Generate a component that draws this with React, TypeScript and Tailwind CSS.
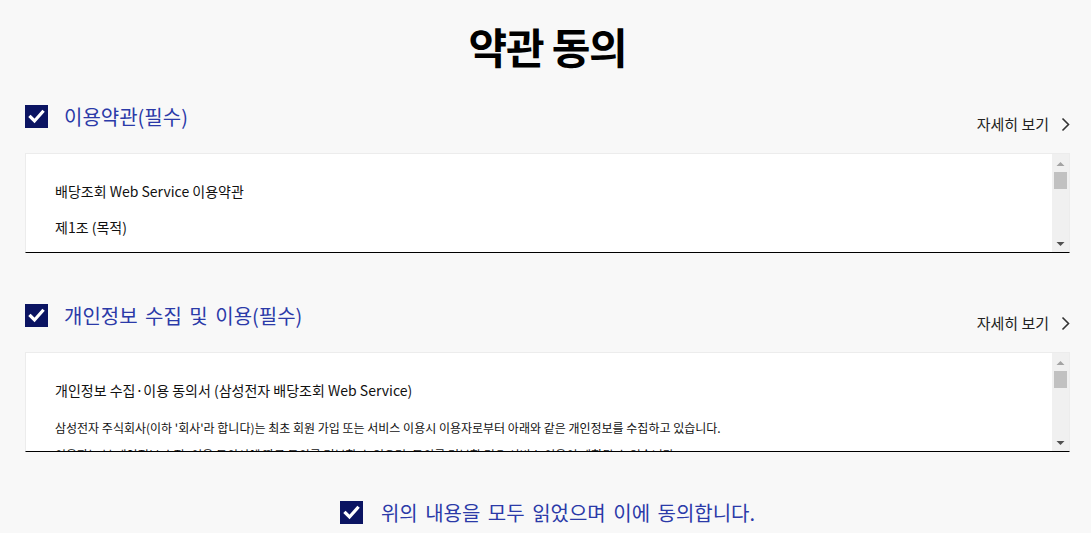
import React from "react";

const FONT = { fontFamily: '"Noto Sans CJK KR", "Noto Sans", sans-serif' };

const CheckBox = () => (
  <span className="flex items-center justify-center w-[23px] h-[23px] bg-[#0b1462] shrink-0">
    <svg width="17" height="17" viewBox="0 0 17 17" fill="none">
      <path d="M2.5 9 L6.5 13 L14.5 4" stroke="#fff" strokeWidth="3.2" strokeLinecap="square" />
    </svg>
  </span>
);

const MoreLink = () => (
  <a className="flex items-center gap-[12px] mt-[8px] text-[15px] text-[#222] cursor-pointer">
    <span>자세히 보기</span>
    <svg width="9" height="15" viewBox="0 0 9 15" fill="none">
      <path d="M1.5 1.5 L7.5 7.5 L1.5 13.5" stroke="#333" strokeWidth="1.6" />
    </svg>
  </a>
);

// classic scrollbar look, drawn beside the scrolling text
const ScrollRail = () => (
  <div className="flex flex-col items-center w-[17px] shrink-0 bg-[#f0f0f0] pt-[7px] pb-[5px]">
    <svg width="9" height="6" viewBox="0 0 9 6">
      <path d="M0.5 5 L4.5 1 L8.5 5 Z" fill="#a3a3a3" />
    </svg>
    <div className="mt-[5px] w-[13px] h-[17px] bg-[#c1c1c1]" />
    <div className="flex-1" />
    <svg width="9" height="6" viewBox="0 0 9 6">
      <path d="M0.5 1 L4.5 5 L8.5 1 Z" fill="#505050" />
    </svg>
  </div>
);

interface SectionProps {
  label: string;
  children: React.ReactNode;
}

const TermsSection: React.FC<SectionProps> = ({ label, children }) => (
  <section>
    <div className="flex items-start justify-between h-[48px]">
      <div className="flex items-center gap-[16px]">
        <CheckBox />
        <span className="text-[20px] leading-[23px] text-[#2b3aa8] [word-spacing:3px]">{label}</span>
      </div>
      <MoreLink />
    </div>
    <div className="flex h-[100px] bg-white border border-[#ececec] border-b-black">
      <div className="flex-1 overflow-y-scroll [scrollbar-width:none]">
        <div className="px-[29px] pt-[27px] text-[#111]">{children}</div>
      </div>
      <ScrollRail />
    </div>
  </section>
);

export default function App() {
  return (
    <div className="min-h-screen bg-[#f8f8f8] pl-[25px] pr-[21px]" style={FONT}>
      <h1 className="pt-[18px] text-center text-[42px] leading-[56px] font-bold text-black tracking-[-0.03em]">
        약관 동의
      </h1>
      <div className="mt-[31px] flex flex-col gap-[51px]">
        <TermsSection label="이용약관(필수)">
          <p className="text-[14px] leading-[20px]">배당조회 Web Service 이용약관</p>
          <p className="mt-[16px] text-[14px] leading-[20px]">제1조 (목적)</p>
          <p className="mt-[16px] text-[13px] leading-[20px]">
            이 약관은 삼성전자 주식회사(이하 '회사'라 합니다)가 제공하는 배당조회 Web Service의 이용조건 및 절차에 관한 사항을 규정함을 목적으로 합니다.
          </p>
        </TermsSection>
        <TermsSection label="개인정보 수집 및 이용(필수)">
          <p className="text-[14px] leading-[20px]">개인정보 수집·이용 동의서 (삼성전자 배당조회 Web Service)</p>
          <p className="mt-[19px] text-[12px] leading-[18px]">
            삼성전자 주식회사(이하 '회사'라 합니다)는 최초 회원 가입 또는 서비스 이용시 이용자로부터 아래와 같은 개인정보를 수집하고 있습니다.
          </p>
          <p className="mt-[9px] text-[12px] leading-[18px]">
            이용자는 본 개인정보 수집·이용 동의서에 따른 동의를 거부할 수 있으며, 동의를 거부할 경우 서비스 이용이 제한될 수 있습니다.
          </p>
        </TermsSection>
      </div>
      <div className="mt-[49px] flex items-center justify-center gap-[18px] pb-[8px]">
        <CheckBox />
        <span className="text-[20px] leading-[23px] text-[#2b3aa8] [word-spacing:3px]">위의 내용을 모두 읽었으며 이에 동의합니다.</span>
      </div>
    </div>
  );
}
